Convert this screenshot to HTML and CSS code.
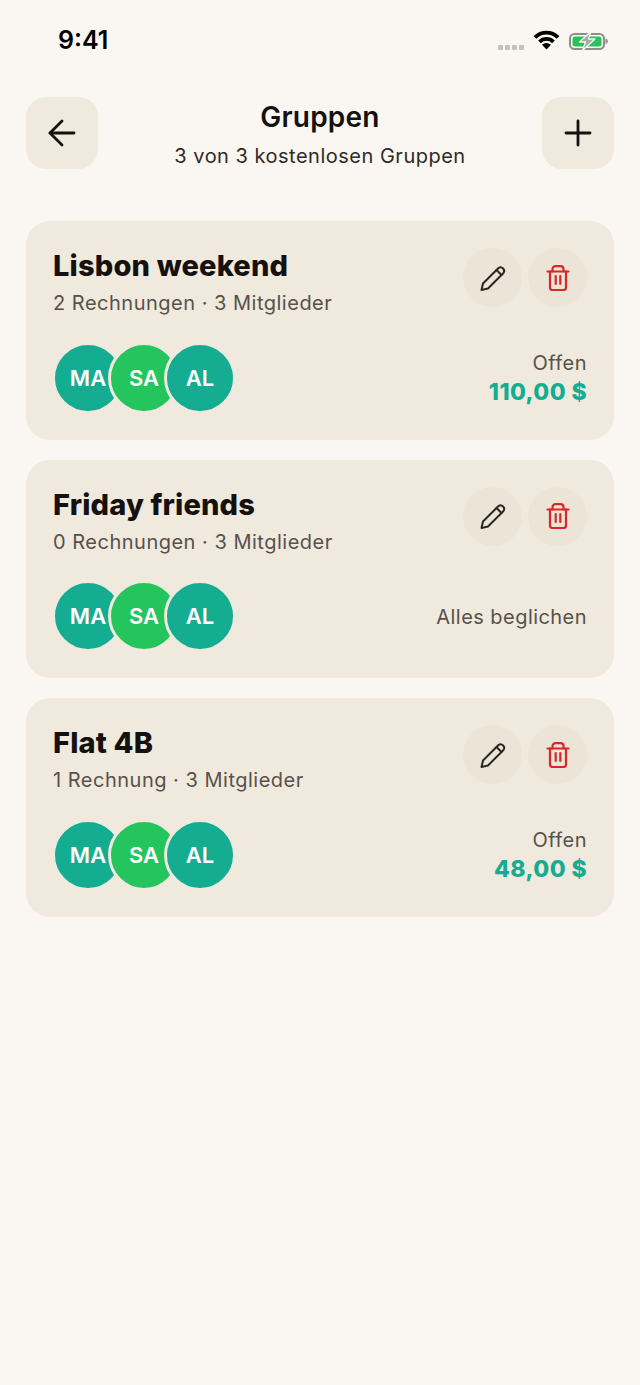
FILE: index.html
```html
<!DOCTYPE html>
<html lang="de">
<head>
  <meta charset="UTF-8">
  <meta name="viewport" content="width=device-width, initial-scale=1.0">
  <title>Gruppen</title>
  <link rel="stylesheet" href="styles.css">
</head>
<body>

  <div class="status-bar">
    <span class="time">9:41</span>
    <div class="status-icons">
      <div class="signal"><i></i><i></i><i></i><i></i></div>
      <svg class="wifi" width="27" height="20" viewBox="0 0 27 20" fill="none" stroke="#000" stroke-width="3.800">
        <path d="M2 7.500a16 16 0 0 1 23 0"/>
        <path d="M6.500 11.800a10 10 0 0 1 14 0"/>
        <path d="M13.500 19.500 9 14.800a6.300 6.300 0 0 1 9 0z" fill="#000" stroke="none"/>
      </svg>
      <svg class="battery" width="40" height="20" viewBox="0 0 40 20">
        <rect x="1" y="4" width="34" height="15" rx="4.500" fill="none" stroke="#8e8e8c" stroke-width="2"/>
        <rect x="3.500" y="6.500" width="29" height="10" rx="2.500" fill="#2ac25a"/>
        <path d="M36.500 8.500c1.500.3 2.300 1.400 2.300 2.800s-.8 2.500-2.300 2.800z" fill="#8e8e8c"/>
        <path d="M22 1.500 10.500 12h6l-3 8.500L26 9h-6.500z" fill="#a9a9a5" stroke="#f9f6f0" stroke-width="1.300" stroke-linejoin="round"/>
      </svg>
    </div>
  </div>

  <header class="top-bar">
    <button class="square-btn">
      <svg width="32" height="32" viewBox="0 0 32 32" fill="none" stroke="#14110f" stroke-width="2.800" stroke-linecap="round" stroke-linejoin="round">
        <path d="M28 16H4"/>
        <path d="M16 4 4 16l12 12"/>
      </svg>
    </button>
    <div class="top-title">
      <h1>Gruppen</h1>
      <p>3 von 3 kostenlosen Gruppen</p>
    </div>
    <button class="square-btn">
      <svg width="32" height="32" viewBox="0 0 32 32" fill="none" stroke="#14110f" stroke-width="2.800" stroke-linecap="round">
        <path d="M4 16h24"/>
        <path d="M16 4v24"/>
      </svg>
    </button>
  </header>

  <main class="group-list">

    <section class="card">
      <div class="card-top">
        <div>
          <h2>Lisbon weekend</h2>
          <p class="meta">2 Rechnungen · 3 Mitglieder</p>
        </div>
        <div class="actions">
          <button class="round-btn">
            <svg width="28" height="28" viewBox="0 0 28 28" fill="none" stroke="#2a2622" stroke-width="2" stroke-linecap="round" stroke-linejoin="round">
              <path d="M2.500 26 4 19.500 19.500 4a3.600 3.600 0 0 1 5 5L9 24.500z"/>
              <path d="M17.500 6l5 5"/>
            </svg>
          </button>
          <button class="round-btn">
            <svg width="24" height="26" viewBox="0 0 24 26" fill="none" stroke="#dc2626" stroke-width="2.200" stroke-linecap="round" stroke-linejoin="round">
              <path d="M1.500 6.500h21"/>
              <path d="M6.500 6.500V4C6.500 2.300 7.800 1.200 9.500 1.200h5c1.700 0 3 1.100 3 2.800v2.500"/>
              <path d="M4 6.500V22.500c0 1.400 1.100 2.500 2.500 2.500h11c1.400 0 2.500-1.100 2.500-2.500V6.500"/>
              <path d="M9.700 11v8M14.300 11v8"/>
            </svg>
          </button>
        </div>
      </div>
      <div class="card-bottom">
        <div class="avatars">
          <span class="avatar teal">MA</span>
          <span class="avatar green">SA</span>
          <span class="avatar teal">AL</span>
        </div>
        <div class="balance">
          <span class="balance-label">Offen</span>
          <span class="balance-amount">110,00 $</span>
        </div>
      </div>
    </section>

    <section class="card">
      <div class="card-top">
        <div>
          <h2>Friday friends</h2>
          <p class="meta">0 Rechnungen · 3 Mitglieder</p>
        </div>
        <div class="actions">
          <button class="round-btn">
            <svg width="28" height="28" viewBox="0 0 28 28" fill="none" stroke="#2a2622" stroke-width="2" stroke-linecap="round" stroke-linejoin="round">
              <path d="M2.500 26 4 19.500 19.500 4a3.600 3.600 0 0 1 5 5L9 24.500z"/>
              <path d="M17.500 6l5 5"/>
            </svg>
          </button>
          <button class="round-btn">
            <svg width="24" height="26" viewBox="0 0 24 26" fill="none" stroke="#dc2626" stroke-width="2.200" stroke-linecap="round" stroke-linejoin="round">
              <path d="M1.500 6.500h21"/>
              <path d="M6.500 6.500V4C6.500 2.300 7.800 1.200 9.500 1.200h5c1.700 0 3 1.100 3 2.800v2.500"/>
              <path d="M4 6.500V22.500c0 1.400 1.100 2.500 2.500 2.500h11c1.400 0 2.500-1.100 2.500-2.500V6.500"/>
              <path d="M9.700 11v8M14.300 11v8"/>
            </svg>
          </button>
        </div>
      </div>
      <div class="card-bottom">
        <div class="avatars">
          <span class="avatar teal">MA</span>
          <span class="avatar green">SA</span>
          <span class="avatar teal">AL</span>
        </div>
        <div class="balance settled">
          <span class="balance-label">Alles beglichen</span>
        </div>
      </div>
    </section>

    <section class="card">
      <div class="card-top">
        <div>
          <h2>Flat 4B</h2>
          <p class="meta">1 Rechnung · 3 Mitglieder</p>
        </div>
        <div class="actions">
          <button class="round-btn">
            <svg width="28" height="28" viewBox="0 0 28 28" fill="none" stroke="#2a2622" stroke-width="2" stroke-linecap="round" stroke-linejoin="round">
              <path d="M2.500 26 4 19.500 19.500 4a3.600 3.600 0 0 1 5 5L9 24.500z"/>
              <path d="M17.500 6l5 5"/>
            </svg>
          </button>
          <button class="round-btn">
            <svg width="24" height="26" viewBox="0 0 24 26" fill="none" stroke="#dc2626" stroke-width="2.200" stroke-linecap="round" stroke-linejoin="round">
              <path d="M1.500 6.500h21"/>
              <path d="M6.500 6.500V4C6.500 2.300 7.800 1.200 9.500 1.200h5c1.700 0 3 1.100 3 2.800v2.500"/>
              <path d="M4 6.500V22.500c0 1.400 1.100 2.500 2.500 2.500h11c1.400 0 2.500-1.100 2.500-2.500V6.500"/>
              <path d="M9.700 11v8M14.300 11v8"/>
            </svg>
          </button>
        </div>
      </div>
      <div class="card-bottom">
        <div class="avatars">
          <span class="avatar teal">MA</span>
          <span class="avatar green">SA</span>
          <span class="avatar teal">AL</span>
        </div>
        <div class="balance">
          <span class="balance-label">Offen</span>
          <span class="balance-amount">48,00 $</span>
        </div>
      </div>
    </section>

  </main>

</body>
</html>
```

FILE: styles.css
```css
* {
  box-sizing: border-box;
}
body {
  margin: 0;
  height: 1385px;
  overflow: hidden;
  background-color: #faf7f2;
  font-family: Inter, "Noto Sans", sans-serif;
  color: #14110f;
}
h1, h2, p {
  margin: 0;
}
button {
  border: none;
  padding: 0;
  display: flex;
  align-items: center;
  justify-content: center;
}

.status-bar {
  height: 97px;
  padding: 26px 31px 0 58px;
  display: flex;
  justify-content: space-between;
  align-items: flex-start;
}
.time {
  font-size: 25px;
  line-height: 29px;
  font-weight: 600;
  color: #000;
}
.status-icons {
  display: flex;
  align-items: flex-end;
  gap: 9px;
  padding-top: 4px;
}
.signal {
  display: flex;
  gap: 2px;
  margin-left: -1px;
}
.signal i {
  width: 5px;
  height: 5px;
  border-radius: 1px;
  background-color: #c4c2be;
}
.wifi, .battery {
  display: block;
}

.top-bar {
  padding: 0 26px;
  display: flex;
  justify-content: space-between;
  height: 72px;
}
.square-btn {
  width: 72px;
  height: 72px;
  border-radius: 20px;
  background-color: #f0e9de;
}
.top-title {
  text-align: center;
}
.top-title h1 {
  font-size: 28px;
  line-height: 41px;
  font-weight: 600;
  letter-spacing: 0.2px;
}
.top-title p {
  font-size: 20px;
  line-height: 30px;
  margin-top: 3px;
  letter-spacing: 0.5px;
  color: #2e2a26;
}

.group-list {
  padding: 52px 26px 0;
  display: flex;
  flex-direction: column;
  gap: 20px;
}
.card {
  height: 218.67px;
  border-radius: 24px;
  background-color: #f0e9de;
  padding: 27px 27px 26px;
  display: flex;
  flex-direction: column;
  justify-content: space-between;
}
.card-top {
  display: flex;
  justify-content: space-between;
}
.card h2 {
  font-size: 29px;
  line-height: 36px;
  font-weight: 800;
  letter-spacing: 0.17px;
}
.meta {
  margin-top: 4px;
  font-size: 20px;
  line-height: 30px;
  letter-spacing: 0.5px;
  color: #57514a;
}
.actions {
  display: flex;
  gap: 6px;
}
.round-btn {
  width: 59px;
  height: 59px;
  border-radius: 50%;
  background-color: #ede4d8;
}

.card-bottom {
  display: flex;
  justify-content: space-between;
  align-items: center;
}
.avatars {
  display: flex;
  margin-left: -1px;
}
.avatar {
  width: 72px;
  height: 72px;
  border: 3px solid #f0e9de;
  border-radius: 50%;
  display: flex;
  align-items: center;
  justify-content: center;
  font-size: 22px;
  font-weight: 600;
  color: #fff;
}
.avatar + .avatar {
  margin-left: -16px;
}
.teal {
  background-color: #14ad92;
}
.green {
  background-color: #25c55e;
}
.balance {
  display: flex;
  flex-direction: column;
  align-items: flex-end;
}
.settled {
  padding-top: 2px;
}
.balance-label {
  font-size: 20px;
  line-height: 30px;
  letter-spacing: 0.45px;
  color: #57514a;
}
.balance-amount {
  font-size: 23px;
  line-height: 29px;
  font-weight: 800;
  letter-spacing: 0.4px;
  color: #14ad92;
}
```
